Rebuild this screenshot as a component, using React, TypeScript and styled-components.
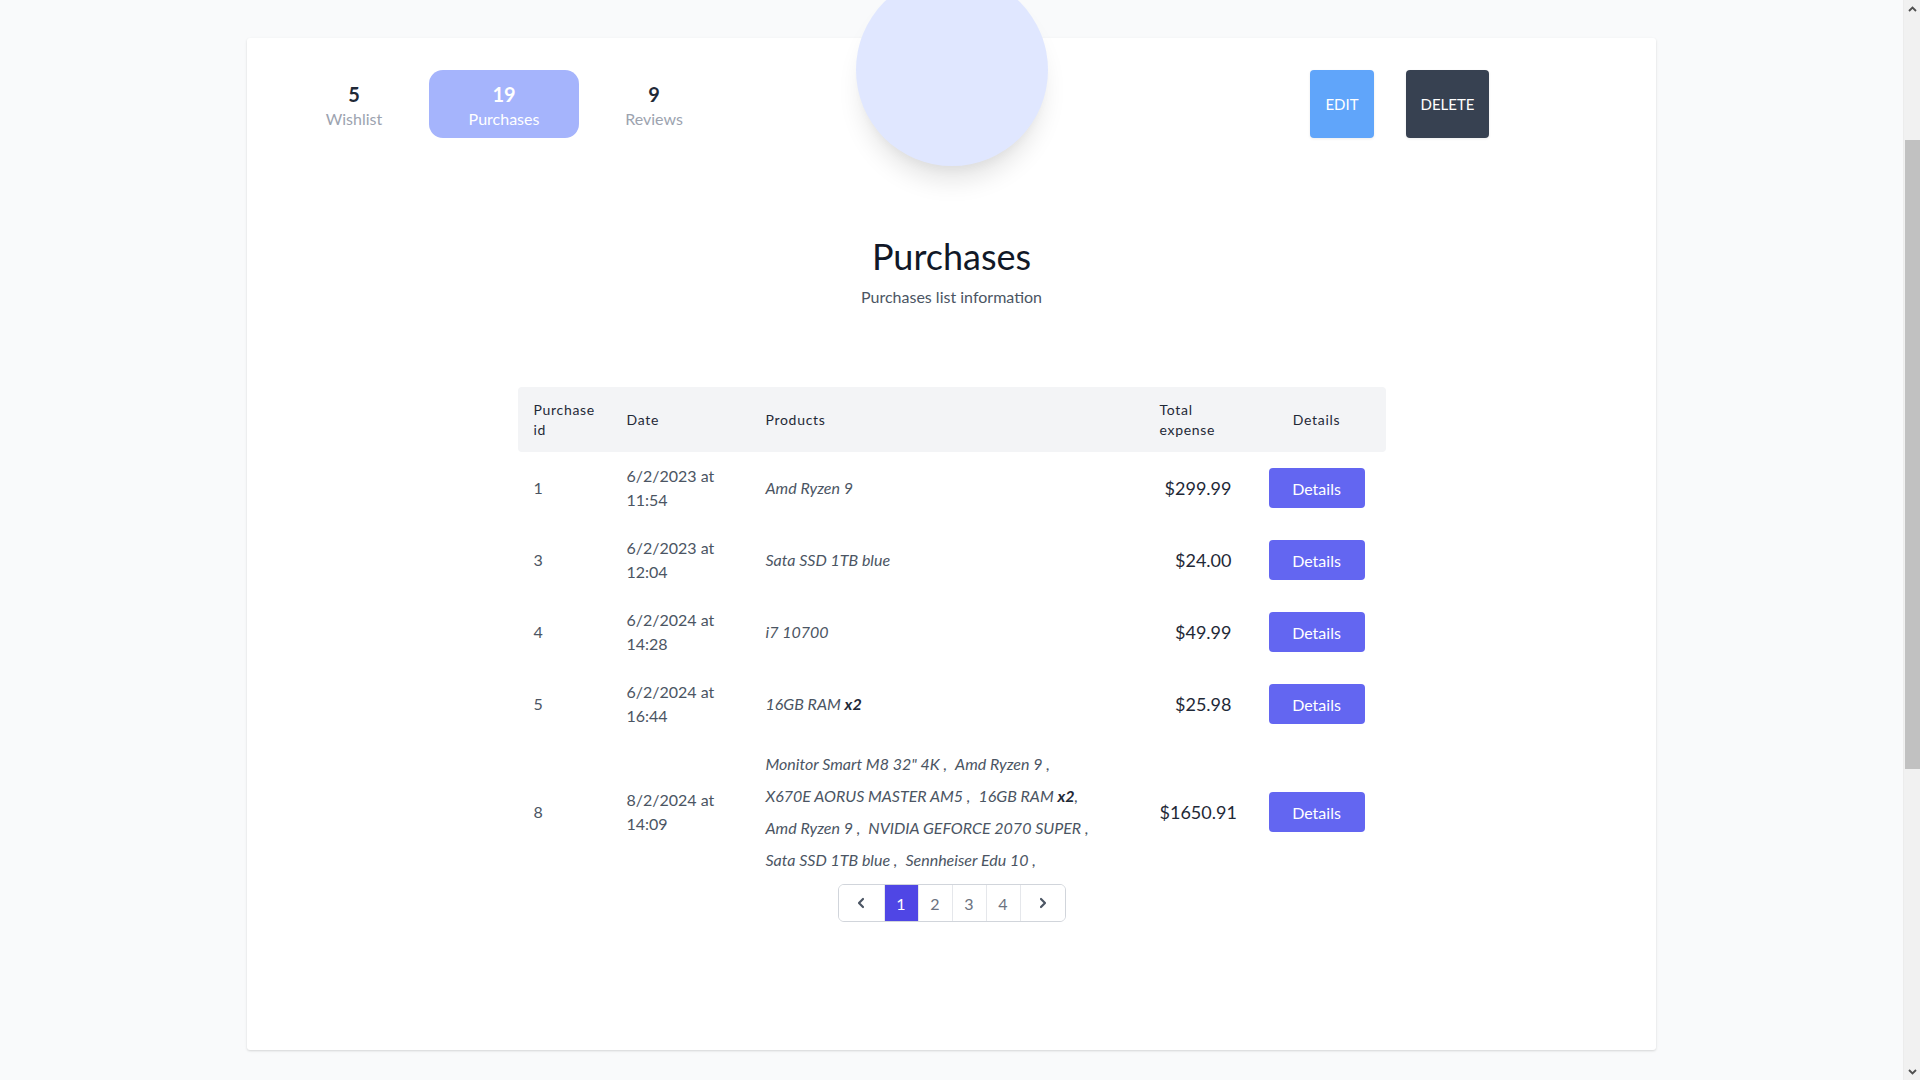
import React, { useLayoutEffect, useEffect } from 'react';
import styled, { createGlobalStyle } from 'styled-components';

const Global = createGlobalStyle`
  html, body { margin: 0; padding: 0; background: #f9fafb; }
  body { font-family: Lato, "Noto Sans", sans-serif; color: #374151; }
  * { box-sizing: border-box; }
`;

const Page = styled.div`
  margin-right: 17px;
  padding: 249px 0 535px;
`;

const ScrollTrack = styled.div`
  position: fixed;
  top: 0;
  right: 0;
  width: 17px;
  height: 100vh;
  background: #f1f1f1;
  border-left: 1px solid #ececec;
  display: flex;
  flex-direction: column;
  justify-content: space-between;
  align-items: center;
`;

const ScrollArrow = styled.div`
  width: 17px;
  height: 17px;
  display: flex;
  align-items: center;
  justify-content: center;
`;

const ScrollThumb = styled.div`
  position: absolute;
  top: 140px;
  left: 1px;
  right: 0;
  height: 629px;
  background: #c1c1c1;
`;

const Card = styled.section`
  position: relative;
  width: 1409px;
  min-height: 1012px;
  margin: 0 auto;
  background: #ffffff;
  border-radius: 3px;
  box-shadow: 0 1px 3px rgba(0, 0, 0, 0.1), 0 1px 2px rgba(0, 0, 0, 0.06);
  padding-top: 32px;
`;

const Avatar = styled.div`
  position: absolute;
  top: -64px;
  left: 50%;
  width: 192px;
  height: 192px;
  margin-left: -96px;
  border-radius: 50%;
  background: #e0e7ff;
  box-shadow: 0 20px 25px -5px rgba(0, 0, 0, 0.1), 0 10px 10px -5px rgba(0, 0, 0, 0.04);
`;

const TopRow = styled.div`
  display: flex;
  justify-content: space-between;
  align-items: stretch;
  height: 68px;
  padding: 0 167px 0 32px;
`;

const Stats = styled.div`
  display: flex;
`;

const Stat = styled.div<{ $active?: boolean }>`
  width: 150px;
  display: flex;
  flex-direction: column;
  align-items: center;
  justify-content: center;
  padding-top: 4px;
  border-radius: 14px;
  background: ${(p) => (p.$active ? '#a5b4fc' : 'transparent')};
  color: ${(p) => (p.$active ? '#ffffff' : '#1f2937')};
`;

const StatNumber = styled.span`
  font-size: 20px;
  line-height: 26px;
  font-weight: 700;
`;

const StatLabel = styled.span<{ $active?: boolean }>`
  font-size: 16px;
  line-height: 24px;
  color: ${(p) => (p.$active ? '#ffffff' : '#9ca3af')};
`;

const Actions = styled.div`
  display: flex;
  gap: 32px;
`;

const ActionButton = styled.button<{ $variant: 'edit' | 'delete' }>`
  width: ${(p) => (p.$variant === 'edit' ? '64px' : '83px')};
  border: none;
  border-radius: 4px;
  padding: 0;
  font-family: inherit;
  font-size: 15px;
  text-transform: uppercase;
  color: #ffffff;
  background: ${(p) => (p.$variant === 'edit' ? '#60a5fa' : '#374151')};
  box-shadow: 0 1px 3px rgba(0, 0, 0, 0.08);
`;

const Heading = styled.h2`
  margin: 98px 0 0;
  text-align: center;
  font-size: 36px;
  line-height: 40px;
  font-weight: 400;
  color: #111827;
`;

const Subheading = styled.p`
  margin: 9px 0 0;
  text-align: center;
  font-size: 16px;
  line-height: 24px;
  color: #4b5563;
`;

const TableWrap = styled.div`
  width: 868px;
  margin: 78px auto 0;
`;

const Table = styled.table`
  width: 868px;
  table-layout: fixed;
  border-collapse: separate;
  border-spacing: 0;
`;

const Th = styled.th<{ $center?: boolean }>`
  height: 65px;
  padding: 0 16px;
  background: #f3f4f6;
  text-align: ${(p) => (p.$center ? 'center' : 'left')};
  font-size: 14px;
  line-height: 20px;
  letter-spacing: 0.05em;
  font-weight: 400;
  color: #1f2937;
  &:first-child { border-radius: 4px 0 0 4px; }
  &:last-child { border-radius: 0 4px 4px 0; }
`;

const Td = styled.td`
  padding: 12px 16px;
  font-size: 16px;
  line-height: 24px;
  color: #4b5563;
  vertical-align: middle;
`;

const ProductsTd = styled(Td)`
  padding: 8px 16px;
  line-height: 32px;
  font-style: italic;
`;

const PriceTd = styled(Td)`
  text-align: right;
  font-size: 18px;
  color: #1f2937;
`;

const DetailsTd = styled(Td)`
  text-align: center;
`;

const Product = styled.span`
  display: inline-block;
  white-space: nowrap;
  margin-right: 8px;
`;

const Qty = styled.b`
  color: #1f2937;
`;

const DetailsButton = styled.button`
  width: 96px;
  height: 40px;
  border: none;
  border-radius: 4px;
  background: #6366f1;
  color: #ffffff;
  font-family: inherit;
  font-size: 16px;
  vertical-align: middle;
`;

const PagerRow = styled.div`
  display: flex;
  justify-content: center;
`;

const Pager = styled.nav`
  display: inline-flex;
  height: 38px;
  border: 1px solid #d1d5db;
  border-radius: 6px;
  overflow: hidden;
`;

const PageItem = styled.span<{ $active?: boolean; $wide?: boolean }>`
  display: flex;
  align-items: center;
  justify-content: center;
  width: ${(p) => (p.$wide ? '45px' : '34px')};
  font-size: 16px;
  color: ${(p) => (p.$active ? '#ffffff' : '#6b7280')};
  background: ${(p) => (p.$active ? '#4f46e5' : '#ffffff')};
  & + & { border-left: 1px solid #e5e7eb; }
`;

type Item = { name: string; qty?: number };
type Purchase = { id: number; date: string; time: string; items: Item[]; total: string };

const purchases: Purchase[] = [
  { id: 1, date: '6/2/2023 at', time: '11:54', items: [{ name: 'Amd Ryzen 9' }], total: '$299.99' },
  { id: 3, date: '6/2/2023 at', time: '12:04', items: [{ name: 'Sata SSD 1TB blue' }], total: '$24.00' },
  { id: 4, date: '6/2/2024 at', time: '14:28', items: [{ name: 'i7 10700' }], total: '$49.99' },
  { id: 5, date: '6/2/2024 at', time: '16:44', items: [{ name: '16GB RAM', qty: 2 }], total: '$25.98' },
  {
    id: 8,
    date: '8/2/2024 at',
    time: '14:09',
    items: [
      { name: 'Monitor Smart M8 32" 4K' },
      { name: 'Amd Ryzen 9' },
      { name: 'X670E AORUS MASTER AM5' },
      { name: '16GB RAM', qty: 2 },
      { name: 'Amd Ryzen 9' },
      { name: 'NVIDIA GEFORCE 2070 SUPER' },
      { name: 'Sata SSD 1TB blue' },
      { name: 'Sennheiser Edu 10' },
    ],
    total: '$1650.91',
  },
];

const Chevron = ({ dir }: { dir: 'left' | 'right' }) => (
  <svg width="10" height="12" viewBox="0 0 10 12" fill="none">
    <path
      d={dir === 'left' ? 'M7 2 L3 6 L7 10' : 'M3 2 L7 6 L3 10'}
      stroke="#4b5563"
      strokeWidth="2.2"
      strokeLinecap="round"
      strokeLinejoin="round"
    />
  </svg>
);

const ScrollChevron = ({ dir }: { dir: 'up' | 'down' }) => (
  <svg width="9" height="6" viewBox="0 0 9 6" fill="none">
    <path
      d={dir === 'up' ? 'M1 5 L4.5 1.5 L8 5' : 'M1 1 L4.5 4.5 L8 1'}
      stroke="#505050"
      strokeWidth="1.8"
    />
  </svg>
);

export default function App() {
  useLayoutEffect(() => {
    window.scrollTo(0, 211);
  }, []);
  useEffect(() => {
    window.scrollTo(0, 211);
  }, []);

  return (
    <>
      <Global />
      <Page>
        <Card>
          <Avatar />
          <TopRow>
            <Stats>
              <Stat>
                <StatNumber>5</StatNumber>
                <StatLabel>Wishlist</StatLabel>
              </Stat>
              <Stat $active>
                <StatNumber>19</StatNumber>
                <StatLabel $active>Purchases</StatLabel>
              </Stat>
              <Stat>
                <StatNumber>9</StatNumber>
                <StatLabel>Reviews</StatLabel>
              </Stat>
            </Stats>
            <Actions>
              <ActionButton $variant="edit">Edit</ActionButton>
              <ActionButton $variant="delete">Delete</ActionButton>
            </Actions>
          </TopRow>

          <Heading>Purchases</Heading>
          <Subheading>Purchases list information</Subheading>

          <TableWrap>
            <Table>
              <colgroup>
                <col style={{ width: 93 }} />
                <col style={{ width: 139 }} />
                <col style={{ width: 394 }} />
                <col style={{ width: 104 }} />
                <col style={{ width: 138 }} />
              </colgroup>
              <thead>
                <tr>
                  <Th>Purchase id</Th>
                  <Th>Date</Th>
                  <Th>Products</Th>
                  <Th>Total expense</Th>
                  <Th $center>Details</Th>
                </tr>
              </thead>
              <tbody>
                {purchases.map((p) => (
                  <tr key={p.id}>
                    <Td>{p.id}</Td>
                    <Td>
                      {p.date}
                      <br />
                      {p.time}
                    </Td>
                    <ProductsTd>
                      {p.items.map((it, i) => (
                        <Product key={i}>
                          {it.name}
                          {it.qty ? (
                            <>
                              {' '}
                              <Qty>x{it.qty}</Qty>
                            </>
                          ) : p.items.length > 1 ? (
                            ' '
                          ) : null}
                          {p.items.length > 1 ? ',' : ''}
                        </Product>
                      ))}
                    </ProductsTd>
                    <PriceTd>{p.total}</PriceTd>
                    <DetailsTd>
                      <DetailsButton>Details</DetailsButton>
                    </DetailsTd>
                  </tr>
                ))}
              </tbody>
            </Table>
            <PagerRow>
              <Pager>
                <PageItem $wide>
                  <Chevron dir="left" />
                </PageItem>
                <PageItem $active>1</PageItem>
                <PageItem>2</PageItem>
                <PageItem>3</PageItem>
                <PageItem>4</PageItem>
                <PageItem $wide>
                  <Chevron dir="right" />
                </PageItem>
              </Pager>
            </PagerRow>
          </TableWrap>
        </Card>
      </Page>
      <ScrollTrack>
        <ScrollArrow>
          <ScrollChevron dir="up" />
        </ScrollArrow>
        <ScrollThumb />
        <ScrollArrow>
          <ScrollChevron dir="down" />
        </ScrollArrow>
      </ScrollTrack>
    </>
  );
}
